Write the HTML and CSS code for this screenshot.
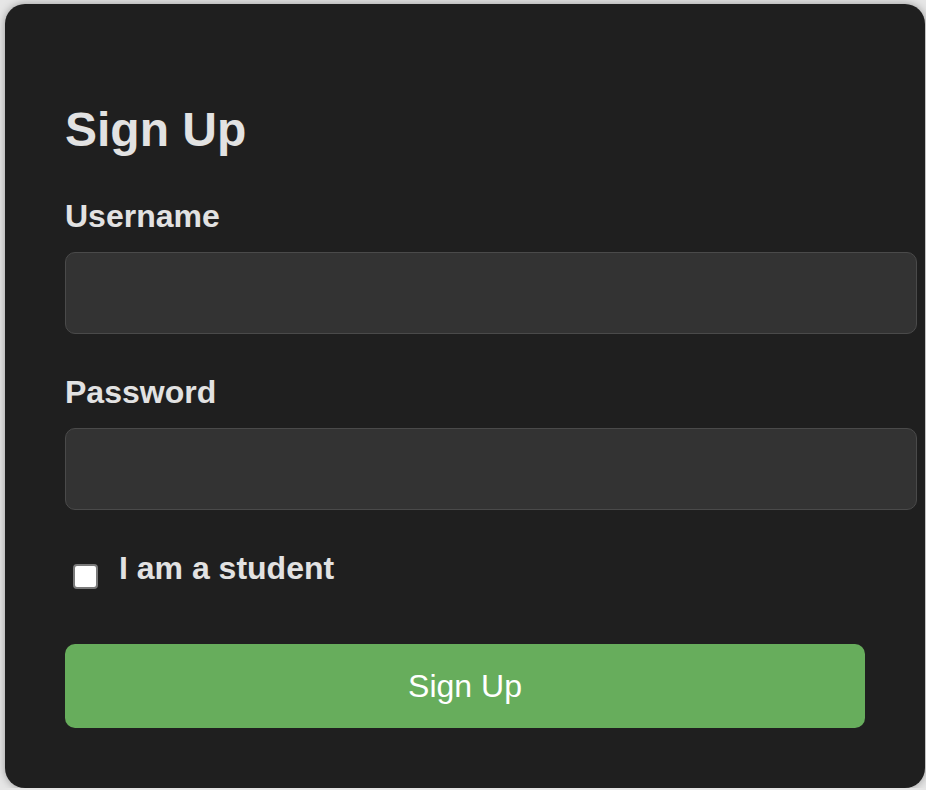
FILE: index.html
```html
<!DOCTYPE html>
<html lang="en">
<head>
<meta charset="utf-8">
<title>Sign Up</title>
<link rel="stylesheet" href="styles.css">
</head>
<body>
  <form class="card">
    <h2 class="title">Sign Up</h2>
    <label class="label" for="username">Username</label>
    <input class="field" id="username" type="text">
    <label class="label" for="password">Password</label>
    <input class="field" id="password" type="password">
    <label class="check-row">
      <input class="check" type="checkbox">
      <span class="check-text">I am a student</span>
    </label>
    <button class="submit" type="button">Sign Up</button>
  </form>
</body>
</html>
```

FILE: styles.css
```css
html, body {
  margin: 0;
  padding: 0;
}

body {
  background: #e6e6e6;
  font-family: "Liberation Sans", Arial, sans-serif;
  overflow: hidden;
}

.card {
  width: 800px;
  margin: 4px 0 0 5px;
  padding: 60px;
  background: #1f1f1f;
  border-radius: 20px;
  box-shadow: 0 0 8px rgba(0, 0, 0, 0.35);
  color: #e2e2e2;
  display: flex;
  flex-direction: column;
  align-items: flex-start;
}

.title {
  margin: 38px 0 41px;
  font-size: 48px;
  line-height: 55px;
  font-weight: bold;
}

.label {
  display: block;
  font-size: 32px;
  line-height: 37px;
  font-weight: bold;
  margin-bottom: 17px;
}

.field {
  box-sizing: content-box;
  width: 100%;
  height: 30px;
  padding: 25px;
  margin: 0 0 40px;
  border: 1px solid #4a4a4a;
  border-radius: 10px;
  background: #333333;
  color: #e2e2e2;
  font-family: inherit;
  font-size: 24px;
  outline: none;
}

.check-row {
  display: flex;
  align-items: flex-start;
  height: 37px;
  margin-bottom: 57px;
}

.check {
  appearance: none;
  -webkit-appearance: none;
  box-sizing: border-box;
  width: 25px;
  height: 25px;
  margin: 14px 21px 0 8px;
  background: #ffffff;
  border: 2px solid #7a7a7a;
  border-radius: 4px;
  flex: none;
}

.check-text {
  font-size: 32px;
  line-height: 37px;
  font-weight: bold;
}

.submit {
  width: 100%;
  height: 84px;
  border: none;
  border-radius: 10px;
  background: #67ad5c;
  color: #ffffff;
  font-family: inherit;
  font-size: 32px;
  padding: 0;
}
```
